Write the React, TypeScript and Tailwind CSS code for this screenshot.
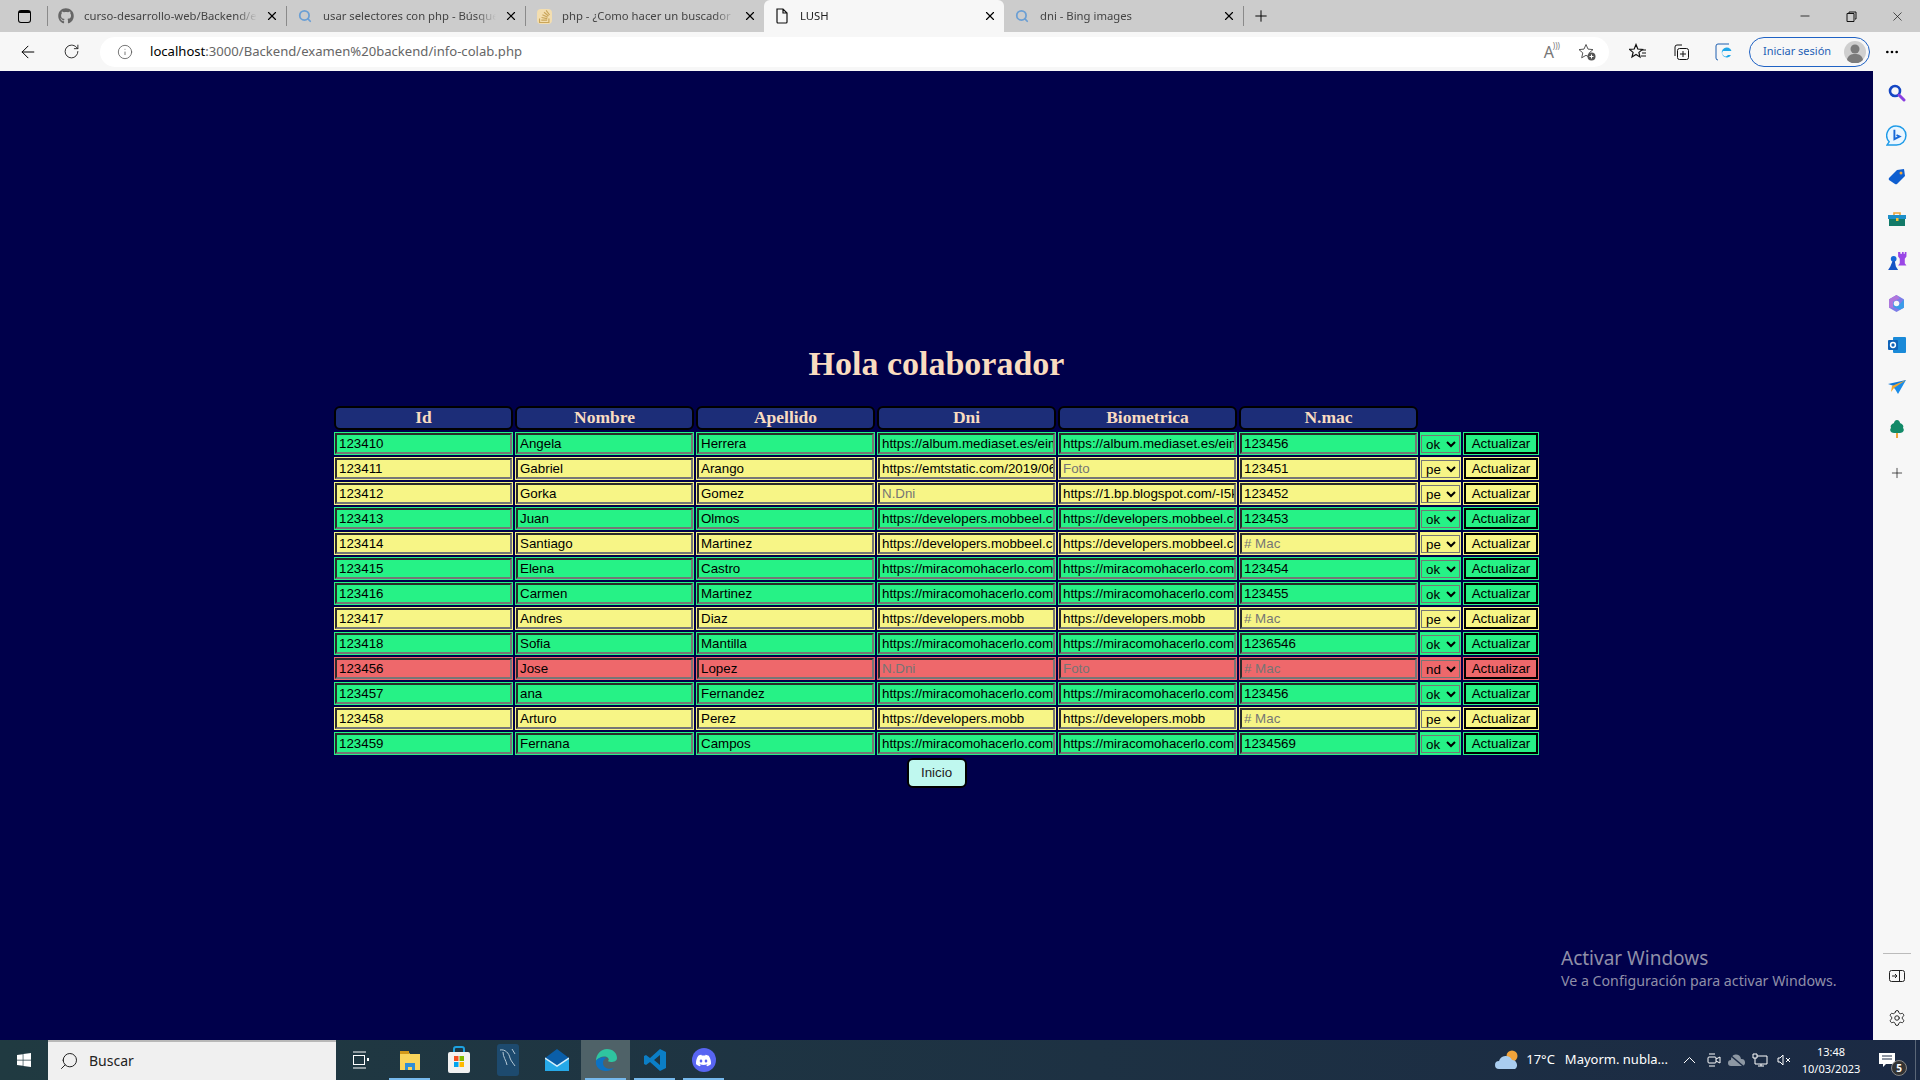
import { ArrowLeft, Info, Minus, MoreHorizontal, Plus, RotateCw, Search, Settings, X } from "lucide-react";
import { FaGithub, FaStackOverflow, FaWindows } from "react-icons/fa";
import { SiDiscord } from "react-icons/si";

type Row = {
  id: string;
  nombre: string;
  apellido: string;
  dni: string;
  bio: string;
  mac: string;
  estado: "ok" | "pe" | "nd";
};

const ALBUM = "https://album.mediaset.es/eimg/2019/06/12/dni.jpg";
const EMT = "https://emtstatic.com/2019/06/dni-foto.jpg";
const BLOG = "https://1.bp.blogspot.com/-I5k2/dni.jpg";
const MOBBEEL = "https://developers.mobbeel.com/docs/dni.png";
const MIRA = "https://miracomohacerlo.com";
const MOBB = "https://developers.mobb";

const rows: Row[] = [
  { id: "123410", nombre: "Angela", apellido: "Herrera", dni: ALBUM, bio: ALBUM, mac: "123456", estado: "ok" },
  { id: "123411", nombre: "Gabriel", apellido: "Arango", dni: EMT, bio: "", mac: "123451", estado: "pe" },
  { id: "123412", nombre: "Gorka", apellido: "Gomez", dni: "", bio: BLOG, mac: "123452", estado: "pe" },
  { id: "123413", nombre: "Juan", apellido: "Olmos", dni: MOBBEEL, bio: MOBBEEL, mac: "123453", estado: "ok" },
  { id: "123414", nombre: "Santiago", apellido: "Martinez", dni: MOBBEEL, bio: MOBBEEL, mac: "", estado: "pe" },
  { id: "123415", nombre: "Elena", apellido: "Castro", dni: MIRA, bio: MIRA, mac: "123454", estado: "ok" },
  { id: "123416", nombre: "Carmen", apellido: "Martinez", dni: MIRA, bio: MIRA, mac: "123455", estado: "ok" },
  { id: "123417", nombre: "Andres", apellido: "Diaz", dni: MOBB, bio: MOBB, mac: "", estado: "pe" },
  { id: "123418", nombre: "Sofia", apellido: "Mantilla", dni: MIRA, bio: MIRA, mac: "1236546", estado: "ok" },
  { id: "123456", nombre: "Jose", apellido: "Lopez", dni: "", bio: "", mac: "", estado: "nd" },
  { id: "123457", nombre: "ana", apellido: "Fernandez", dni: MIRA, bio: MIRA, mac: "123456", estado: "ok" },
  { id: "123458", nombre: "Arturo", apellido: "Perez", dni: MOBB, bio: MOBB, mac: "", estado: "pe" },
  { id: "123459", nombre: "Fernana", apellido: "Campos", dni: MIRA, bio: MIRA, mac: "1234569", estado: "ok" },
];

const rowColor = {
  ok: "bg-[#26f286]",
  pe: "bg-[#f7f586]",
  nd: "bg-[#ee686b]",
};

function Cell({ value, placeholder, color }: { value: string; placeholder?: string; color: string }) {
  return (
    <td className={`p-px ${color}`}>
      <input
        type="text"
        defaultValue={value}
        placeholder={placeholder}
        className="block h-[21px] w-full border-2 border-t-[#2b2b2b] border-l-[#2b2b2b] border-r-[#767676] border-b-[#767676] bg-transparent py-px pl-0.5 pr-0 font-['Liberation_Sans',sans-serif] text-[13.3333px] text-black outline-none placeholder:text-[#757575]"
      />
    </td>
  );
}

function Tab({ icon, title, active, width }: { icon: React.ReactNode; title: string; active?: boolean; width: string }) {
  return (
    <div className={`relative flex h-8 shrink-0 items-center pl-[10px] pr-[7px] ${width} ${active ? "rounded-t-md bg-[#f7f7f7]" : ""}`}>
      <span className="flex w-4 shrink-0 justify-center">{icon}</span>
      <span
        className={`ml-[10px] flex-1 overflow-hidden whitespace-nowrap text-[11.3px] [mask-image:linear-gradient(to_right,black_88%,transparent)] ${active ? "text-[#222]" : "text-[#444]"}`}
      >
        {title}
      </span>
      <X size={14} strokeWidth={2} className="ml-2 shrink-0 text-black" />
    </div>
  );
}

function Bing({ className }: { className?: string }) {
  return <Search size={14} strokeWidth={3} className={className ?? "text-[#6b9fd4]"} />;
}

function EdgeIcon() {
  return (
    <svg width="24" height="24" viewBox="0 0 24 24">
      <path d="M2 13C2 6 7 1 13 1c6 0 10 4 10 9 0 3-3 4-6 4-2 0-3-1-3-1 1-1 1-2 0-3-3-3-9-1-12 3z" fill="#2fc4a0" />
      <path d="M2 13c-1 6 4 10 10 10 3 0 6-1 8-3-5 2-11 0-11-5 0-3 2-5 5-5-5-2-11 0-12 3z" fill="#0c72c4" />
    </svg>
  );
}

function VsCode() {
  return (
    <svg width="24" height="24" viewBox="0 0 24 24">
      <path d="M17 1l6 3v16l-6 3-10-9-4 3-2-1V8l2-1 4 3zM17 7l-6 5 6 5z" fill="#0b7ec6" />
    </svg>
  );
}

function Explorer() {
  return (
    <svg width="24" height="24" viewBox="0 0 24 24">
      <path d="M2 3h8l2 3h10v16H2z" fill="#f9d55b" />
      <path d="M2 3h9v3H2z" fill="#d39a1a" />
      <path d="M7 15h10v7h-3v-3h-4v3H7z" fill="#2f8fd6" />
    </svg>
  );
}

function Store() {
  return (
    <svg width="24" height="28" viewBox="0 0 24 28">
      <path d="M7 6V3a2 2 0 012-2h6a2 2 0 012 2v3" fill="none" stroke="#1da1e0" strokeWidth="2" />
      <rect x="1" y="6" width="22" height="21" rx="2" fill="#f1f1f1" />
      <rect x="7" y="10" width="4.5" height="5" fill="#f25022" />
      <rect x="12.5" y="10" width="4.5" height="5" fill="#7fba00" />
      <rect x="7" y="16" width="4.5" height="5" fill="#00a4ef" />
      <rect x="12.5" y="16" width="4.5" height="5" fill="#ffb900" />
    </svg>
  );
}

function Workbench() {
  return (
    <svg width="24" height="32" viewBox="0 0 24 32">
      <rect x="1" y="0" width="22" height="32" rx="3" fill="#1d4a6e" />
      <path d="M4 6c5-1 9 3 10 8 1 3 3 5 5 8M7 8c0 5 3 8 4 13M16 5l3 5" fill="none" stroke="#b5c9d6" strokeWidth="1" />
    </svg>
  );
}

function Mail() {
  return (
    <svg width="24" height="24" viewBox="0 0 24 24">
      <path d="M12 1l12 9v13H0V10z" fill="#0a5ea8" />
      <path d="M0 10l12 8 12-8v13H0z" fill="#26a9e8" />
      <path d="M0 10l12 8 12-8" fill="none" stroke="#d8f0fb" strokeWidth="1.5" />
    </svg>
  );
}

function SideIcon({ children }: { children: React.ReactNode }) {
  return <div className="flex h-[42px] items-center justify-center">{children}</div>;
}

const sideIcons = [
  <svg key="search" width="18" height="18" viewBox="0 0 18 18">
    <circle cx="7" cy="7" r="5" fill="none" stroke="#1547c4" strokeWidth="2.6" />
    <path d="M11 11l5 5" stroke="#8a3fe0" strokeWidth="3" strokeLinecap="round" />
  </svg>,
  <svg key="bing" width="21" height="21" viewBox="0 0 20 20">
    <path d="M10 1a9 9 0 019 9 9 9 0 01-9 9H1l2-3a9 9 0 017-15z" fill="#eaf6ff" stroke="#1e9be8" strokeWidth="1.4" />
    <path d="M8 4.500v9l5-2.500-3-1.500" fill="none" stroke="#1668d8" strokeWidth="1.8" />
  </svg>,
  <svg key="tag" width="18" height="18" viewBox="0 0 18 18">
    <path d="M1 10l8-8 7-1 1 7-8 8a2 2 0 01-2 0l-6-4a2 2 0 010-2z" fill="#0f5fd0" />
    <circle cx="13" cy="5" r="1.5" fill="#f5a83a" />
  </svg>,
  <svg key="tools" width="18" height="16" viewBox="0 0 18 16">
    <path d="M6 4V2h6v2" fill="none" stroke="#eda53a" strokeWidth="1.6" />
    <rect y="4" width="18" height="4" fill="#1d8fc9" />
    <rect x="1" y="8" width="16" height="7" fill="#127a68" />
    <rect x="8" y="7" width="2.5" height="3" fill="#f5c33a" />
  </svg>,
  <svg key="games" width="20" height="20" viewBox="0 0 18 18">
    <circle cx="6" cy="7" r="2.6" fill="#1668d8" />
    <path d="M5 9h2l1 5 2 3H1l2-3z" fill="#1553c4" />
    <path d="M10 1h2v1.5h1.5V1H15v1.5h1V1h1.5v4L16 7v4l1.5 2H10l1.5-2V7L10 5z" fill="#9a46e6" />
  </svg>,
  <svg key="m365" width="19" height="19" viewBox="0 0 18 18">
    <path d="M9 1l7 4v8l-7 4-7-4V5z" fill="#7d7de8" />
    <path d="M2 5l7-4 3 3-6 3v6l-4 0z" fill="#b076dc" />
    <path d="M6 7l6 3 4-5v8l-4 2-6-3z" fill="#3a9ce8" />
    <circle cx="9" cy="9" r="2.6" fill="#f7f7f7" />
  </svg>,
  <svg key="outlook" width="18" height="18" viewBox="0 0 18 18">
    <rect x="5" y="1" width="13" height="16" rx="1" fill="#1a8ad8" />
    <rect x="0" y="4" width="10" height="10" rx="1" fill="#0f63b8" />
    <circle cx="5" cy="9" r="2.4" fill="none" stroke="#fff" strokeWidth="1.5" />
  </svg>,
  <svg key="send" width="18" height="14" viewBox="0 0 18 14">
    <path d="M0 4l18-4-9 7z" fill="#0f78d8" />
    <path d="M4 6l14-6-8 14-3-5z" fill="#1a8ce8" />
    <path d="M4 6l14-6L6 8l-3 4z" fill="#f2a62a" />
  </svg>,
  <svg key="tree" width="16" height="18" viewBox="0 0 16 18">
    <path d="M8 0c2 0 3 2 3 3 3 1 4 3 3 5 2 2 0 5-3 5H5c-3 0-5-3-3-5-1-2 0-4 3-5 0-1 1-3 3-3z" fill="#128a68" />
    <rect x="7" y="13" width="2" height="5" fill="#eda53a" />
  </svg>,
];

export default function App() {
  return (
    <div className="flex h-screen w-screen flex-col overflow-hidden bg-[#00004b] font-['Noto_Sans',sans-serif]">
      {/* tab strip */}
      <div className="flex h-8 shrink-0 items-center bg-[#cccccc]">
        <div className="flex w-[47px] shrink-0 justify-center pl-[2px]">
          <div className="h-[13px] w-[13px] rounded-[3px] border-[1.5px] border-t-[3px] border-black" />
        </div>
        <div className="h-5 w-px shrink-0 bg-[#8a8a8a]" />
        <Tab width="w-[238px]" icon={<FaGithub size={16} className="text-[#666]" />} title="curso-desarrollo-web/Backend/e" />
        <div className="h-5 w-px shrink-0 bg-[#8a8a8a]" />
        <Tab width="w-[238px]" icon={<Bing />} title="usar selectores con php - Búsque" />
        <div className="h-5 w-px shrink-0 bg-[#8a8a8a]" />
        <Tab width="w-[238px]" icon={<FaStackOverflow size={15} className="rounded-sm bg-[#f3deb0] text-[#c9a55a]" />} title="php - ¿Como hacer un buscador" />
        <Tab active width="w-[240px]" icon={<svg width="14" height="16" viewBox="0 0 14 16"><path d="M2 1h6l4 4v9a1 1 0 01-1 1H3a1 1 0 01-1-1zM8 1v4h4" fill="none" stroke="#111" strokeWidth="1.2" /></svg>} title="LUSH" />
        <Tab width="w-[239px]" icon={<Bing />} title="dni - Bing images" />
        <div className="h-5 w-px shrink-0 bg-[#8a8a8a]" />
        <Plus size={18} strokeWidth={1.3} className="ml-2 shrink-0 text-black" />
        <div className="ml-auto flex items-center text-[#111]">
          <span className="flex w-[46px] justify-center"><Minus size={14} strokeWidth={1.4} /></span>
          <span className="flex w-[46px] justify-center">
            <svg width="11" height="11" viewBox="0 0 11 11"><path d="M3 2V1h7v7H9M1 2.5h7v8H1z" fill="none" stroke="#111" /></svg>
          </span>
          <span className="flex w-[46px] justify-center"><X size={15} strokeWidth={1.1} /></span>
        </div>
      </div>

      {/* toolbar */}
      <div className="flex h-[39px] shrink-0 items-center bg-[#f7f7f7]">
        <span className="flex w-[55px] justify-center"><ArrowLeft size={20} strokeWidth={1.2} className="text-black" /></span>
        <span className="flex w-[33px] justify-center"><RotateCw size={17} strokeWidth={1.3} className="text-[#222]" /></span>
        <div className="ml-[12px] flex h-[30px] w-[1509px] shrink-0 items-center rounded-full bg-white">
          <Info size={16} strokeWidth={1.2} className="ml-[17px] text-[#555]" />
          <span className="ml-[17px] text-[13.1px] text-[#666]">
            <span className="text-black">localhost</span>:3000/Backend/examen%20backend/info-colab.php
          </span>
          <div className="ml-auto mr-[13px] flex items-center gap-[24px]">
            <span className="relative font-['Noto_Sans',sans-serif] text-base leading-none text-[#777]">A<span className="absolute -right-1.5 -top-0.5 text-[8px]">)))</span></span>
            <svg width="18" height="18" viewBox="0 0 18 18">
              <path d="M8 1.5l2 4.6 5 .5-3.8 3.3 1.1 4.9L8 12.3l-4.300 2.500 1.100-4.900L1 6.600l5-.5z" fill="none" stroke="#555" />
              <circle cx="13.500" cy="13.500" r="4" fill="#555" />
              <path d="M13.500 11.500v4M11.500 13.500h4" stroke="#fff" />
            </svg>
          </div>
        </div>
        <div className="ml-[20px] flex items-center gap-[25px]">
          <svg width="18" height="18" viewBox="0 0 18 18">
            <path d="M7 1.500l1.800 4.500 4.700.4-3.600 3 1.100 4.600L7 11.500l-4 2.500 1.100-4.600-3.600-3 4.700-.4z" fill="none" stroke="#111" strokeWidth="1.200" />
            <path d="M13 7h4M13 10h4M12 13h5" stroke="#111" />
          </svg>
          <svg width="18" height="18" viewBox="0 0 18 18">
            <path d="M3 13V4a2 2 0 012-2h5" fill="none" stroke="#111" />
            <rect x="5.500" y="5.500" width="11" height="11" rx="2" fill="none" stroke="#111" />
            <path d="M11 8v6M8 11h6" stroke="#111" />
          </svg>
          <svg width="18" height="18" viewBox="0 0 18 18">
            <path d="M14 1H3a2 2 0 00-2 2v12a2 2 0 002 2" fill="none" stroke="#1d5fb0" />
            <path d="M16 12a5 5 0 11.500-4H8a3 3 0 005 4z" fill="#1ea7ea" />
          </svg>
        </div>
        <div className="ml-[16px] flex h-[30px] w-[121px] shrink-0 items-center justify-between rounded-full border border-[#1f62c4] pl-[13px] pr-[3px]">
          <span className="whitespace-nowrap text-[11px] text-[#1f5fb5]">Iniciar sesión</span>
          <svg width="22" height="22" viewBox="0 0 22 22">
            <circle cx="11" cy="11" r="11" fill="#cfcfcf" />
            <circle cx="11" cy="8" r="4.500" fill="#7b7b7b" />
            <path d="M3 19c1-5 4-6 8-6s7 1 8 6a11 11 0 01-16 0z" fill="#7b7b7b" />
          </svg>
        </div>
        <MoreHorizontal size={16} className="ml-[14px] text-black" />
      </div>

      {/* page + edge sidebar */}
      <div className="flex min-h-0 flex-1">
        <main className="relative flex min-w-0 flex-1 flex-col items-center">
          <h1 className="mt-[273px] font-['Liberation_Serif',serif] text-[34px] font-bold leading-[40px] text-[#f9dcc0]">
            Hola colaborador
          </h1>
          <table className="mt-[20px] w-[1209px] table-fixed border-separate [border-spacing:2px]">
            <colgroup>
              <col className="w-[179px]" />
              <col className="w-[179px]" />
              <col className="w-[179px]" />
              <col className="w-[179px]" />
              <col className="w-[179px]" />
              <col className="w-[179px]" />
              <col className="w-[41px]" />
              <col className="w-[76px]" />
            </colgroup>
            <thead>
              <tr>
                {["Id", "Nombre", "Apellido", "Dni", "Biometrica", "N.mac"].map((h) => (
                  <th
                    key={h}
                    className="h-6 rounded-md border-2 border-black bg-[#1c2d78] p-0 font-['Liberation_Serif',serif] text-[17.5px] font-bold leading-none text-[#f9dcc0]"
                  >
                    {h}
                  </th>
                ))}
                <th />
                <th />
              </tr>
            </thead>
            <tbody>
              {rows.map((r) => {
                const color = rowColor[r.estado];
                return (
                  <tr key={r.id}>
                    <Cell value={r.id} color={color} />
                    <Cell value={r.nombre} color={color} />
                    <Cell value={r.apellido} color={color} />
                    <Cell value={r.dni} placeholder="N.Dni" color={color} />
                    <Cell value={r.bio} placeholder="Foto" color={color} />
                    <Cell value={r.mac} placeholder="# Mac" color={color} />
                    <td className={`p-px pt-[2px] ${color}`}>
                      <select
                        defaultValue={r.estado}
                        className="block h-[18px] w-full rounded-none border border-[#767676] bg-transparent font-['Liberation_Sans',sans-serif] text-[13.3333px] leading-none text-black outline-none"
                      >
                        <option value="ok">ok</option>
                        <option value="pe">pe</option>
                        <option value="nd">nd</option>
                      </select>
                    </td>
                    <td className={`p-px ${color}`}>
                      <button className="block h-[21px] w-full border-2 border-black bg-transparent font-['Liberation_Sans',sans-serif] text-[13.3333px] leading-none text-black">
                        Actualizar
                      </button>
                    </td>
                  </tr>
                );
              })}
            </tbody>
          </table>
          <button className="mt-px h-[30px] w-[60px] rounded-[6px] border-2 border-black bg-[#bff8ef] font-['Liberation_Sans',sans-serif] text-[13.3333px] text-[#222]">
            Inicio
          </button>

          <div className="absolute left-[1561px] top-[875px] whitespace-nowrap text-[#8f8fa8]">
            <div className="text-[19px] leading-6">Activar Windows</div>
            <div className="text-[14.2px] leading-[22px]">Ve a Configuración para activar Windows.</div>
          </div>
        </main>

        <aside className="flex w-[47px] shrink-0 flex-col items-center bg-[#f7f7f7] pt-px">
          {sideIcons.map((icon, i) => (
            <SideIcon key={i}>{icon}</SideIcon>
          ))}
          <div className="flex h-[46px] items-center justify-center">
            <Plus size={16} strokeWidth={1} className="text-black" />
          </div>
          <div className="mt-auto h-px w-7 bg-[#bbb]" />
          <div className="mt-[16px] flex flex-col items-center gap-[27px] pb-[2px]">
            <svg width="16" height="12" viewBox="0 0 16 12">
              <rect x=".5" y=".5" width="15" height="11" rx="2" fill="none" stroke="#222" />
              <path d="M10.500 0v12" stroke="#222" />
              <path d="M3 6h5M6 4l2 2-2 2" fill="none" stroke="#222" />
            </svg>
            <Settings size={18} strokeWidth={1.3} className="mb-[11px] text-[#222]" />
          </div>
        </aside>
      </div>

      {/* windows taskbar */}
      <div className="flex h-10 shrink-0 items-center bg-gradient-to-r from-[#203a41] to-[#1b2a44] text-white">
        <span className="flex w-12 justify-center"><FaWindows size={16} /></span>
        <div className="flex h-full w-[288px] items-center border-t-2 border-[#b8b8b8] bg-[#f0f0f0] pl-[11px]">
          <Search size={20} strokeWidth={1.2} className="-scale-x-100 text-[#222]" />
          <span className="ml-[10px] text-sm text-[#222]">Buscar</span>
        </div>
        <span className="flex w-[49px] justify-center">
          <svg width="16" height="18" viewBox="0 0 16 18">
            <path d="M0 1h13M0 17h13" stroke="#fff" />
            <rect x=".5" y="4.500" width="11" height="9" fill="none" stroke="#fff" />
            <rect x="14" y="7" width="2.500" height="3" fill="#fff" />
          </svg>
        </span>
        <div className="flex h-full">
          <TaskIcon on><Explorer /></TaskIcon>
          <TaskIcon><Store /></TaskIcon>
          <TaskIcon><Workbench /></TaskIcon>
          <TaskIcon><Mail /></TaskIcon>
          <TaskIcon on active><EdgeIcon /></TaskIcon>
          <TaskIcon on><VsCode /></TaskIcon>
          <TaskIcon on>
            <span className="flex h-6 w-6 items-center justify-center rounded-full bg-[#5865f2]"><SiDiscord size={15} /></span>
          </TaskIcon>
        </div>

        <div className="ml-auto flex h-full items-center">
          <svg width="26" height="22" viewBox="0 0 26 22">
            <circle cx="18" cy="7" r="5.500" fill="#f2a33a" />
            <path d="M5 20a4 4 0 010-8 7 7 0 0113-1 5 5 0 013 9z" fill="#a9cdf0" />
          </svg>
          <span className="ml-[6px] text-[13px]">17°C</span>
          <span className="ml-[10px] whitespace-nowrap text-[13px]">Mayorm. nubla...</span>
          <svg className="ml-[15px]" width="13" height="8" viewBox="0 0 13 8"><path d="M1 7l5.500-5.500L12 7" fill="none" stroke="#fff" /></svg>
          <svg className="ml-[11px]" width="14" height="16" viewBox="0 0 14 16">
            <rect x="1" y="5" width="8" height="6" rx="1" fill="none" stroke="#fff" />
            <path d="M9 7l4-2v6l-4-2M2 2h6M2 14h6" fill="none" stroke="#fff" />
          </svg>
          <svg className="ml-[6px]" width="18" height="13" viewBox="0 0 18 13">
            <path d="M4 12a3 3 0 010-6 5 5 0 0110-1 3.500 3.500 0 011 7z" fill="#8d97a3" />
            <path d="M3 1l13 11" stroke="#1b2a44" strokeWidth="1.500" />
          </svg>
          <svg className="ml-[7px]" width="16" height="14" viewBox="0 0 16 14">
            <path d="M1 1h4v4H1zM5 3h10v8H3V5M9 11v2M6 13h6" fill="none" stroke="#fff" />
          </svg>
          <svg className="ml-[9px]" width="15" height="12" viewBox="0 0 15 12">
            <path d="M1 4h2l3-3v10L3 8H1zM9 4l4 4M13 4l-4 4" fill="none" stroke="#fff" />
          </svg>
          <div className="ml-[7px] flex w-[64px] flex-col items-center text-[11px] leading-[17px]">
            <span>13:48</span>
            <span>10/03/2023</span>
          </div>
          <div className="relative ml-[16px] mr-[10px] flex h-full w-[26px] items-center">
            <svg width="16" height="15" viewBox="0 0 16 15">
              <path d="M0 0h16v11h-9l-3 3v-3H0z" fill="#fff" />
              <path d="M3 3h10M3 6h10" stroke="#1b2a44" />
            </svg>
            <span className="absolute bottom-[4px] right-[-2px] flex h-4 w-4 items-center justify-center rounded-full border border-[#888] bg-[#333] text-[10px] font-bold">5</span>
          </div>
          <div className="h-full w-px bg-[#5a6677]" />
          <div className="w-1" />
        </div>
      </div>
    </div>
  );
}

function TaskIcon({ children, on, active }: { children: React.ReactNode; on?: boolean; active?: boolean }) {
  return (
    <div className={`relative flex h-full w-[49px] items-center justify-center ${active ? "bg-[#4f6268]" : ""}`}>
      {children}
      {on && <div className="absolute bottom-0 left-1 right-1 h-[2px] bg-[#76b9ed]" />}
    </div>
  );
}
